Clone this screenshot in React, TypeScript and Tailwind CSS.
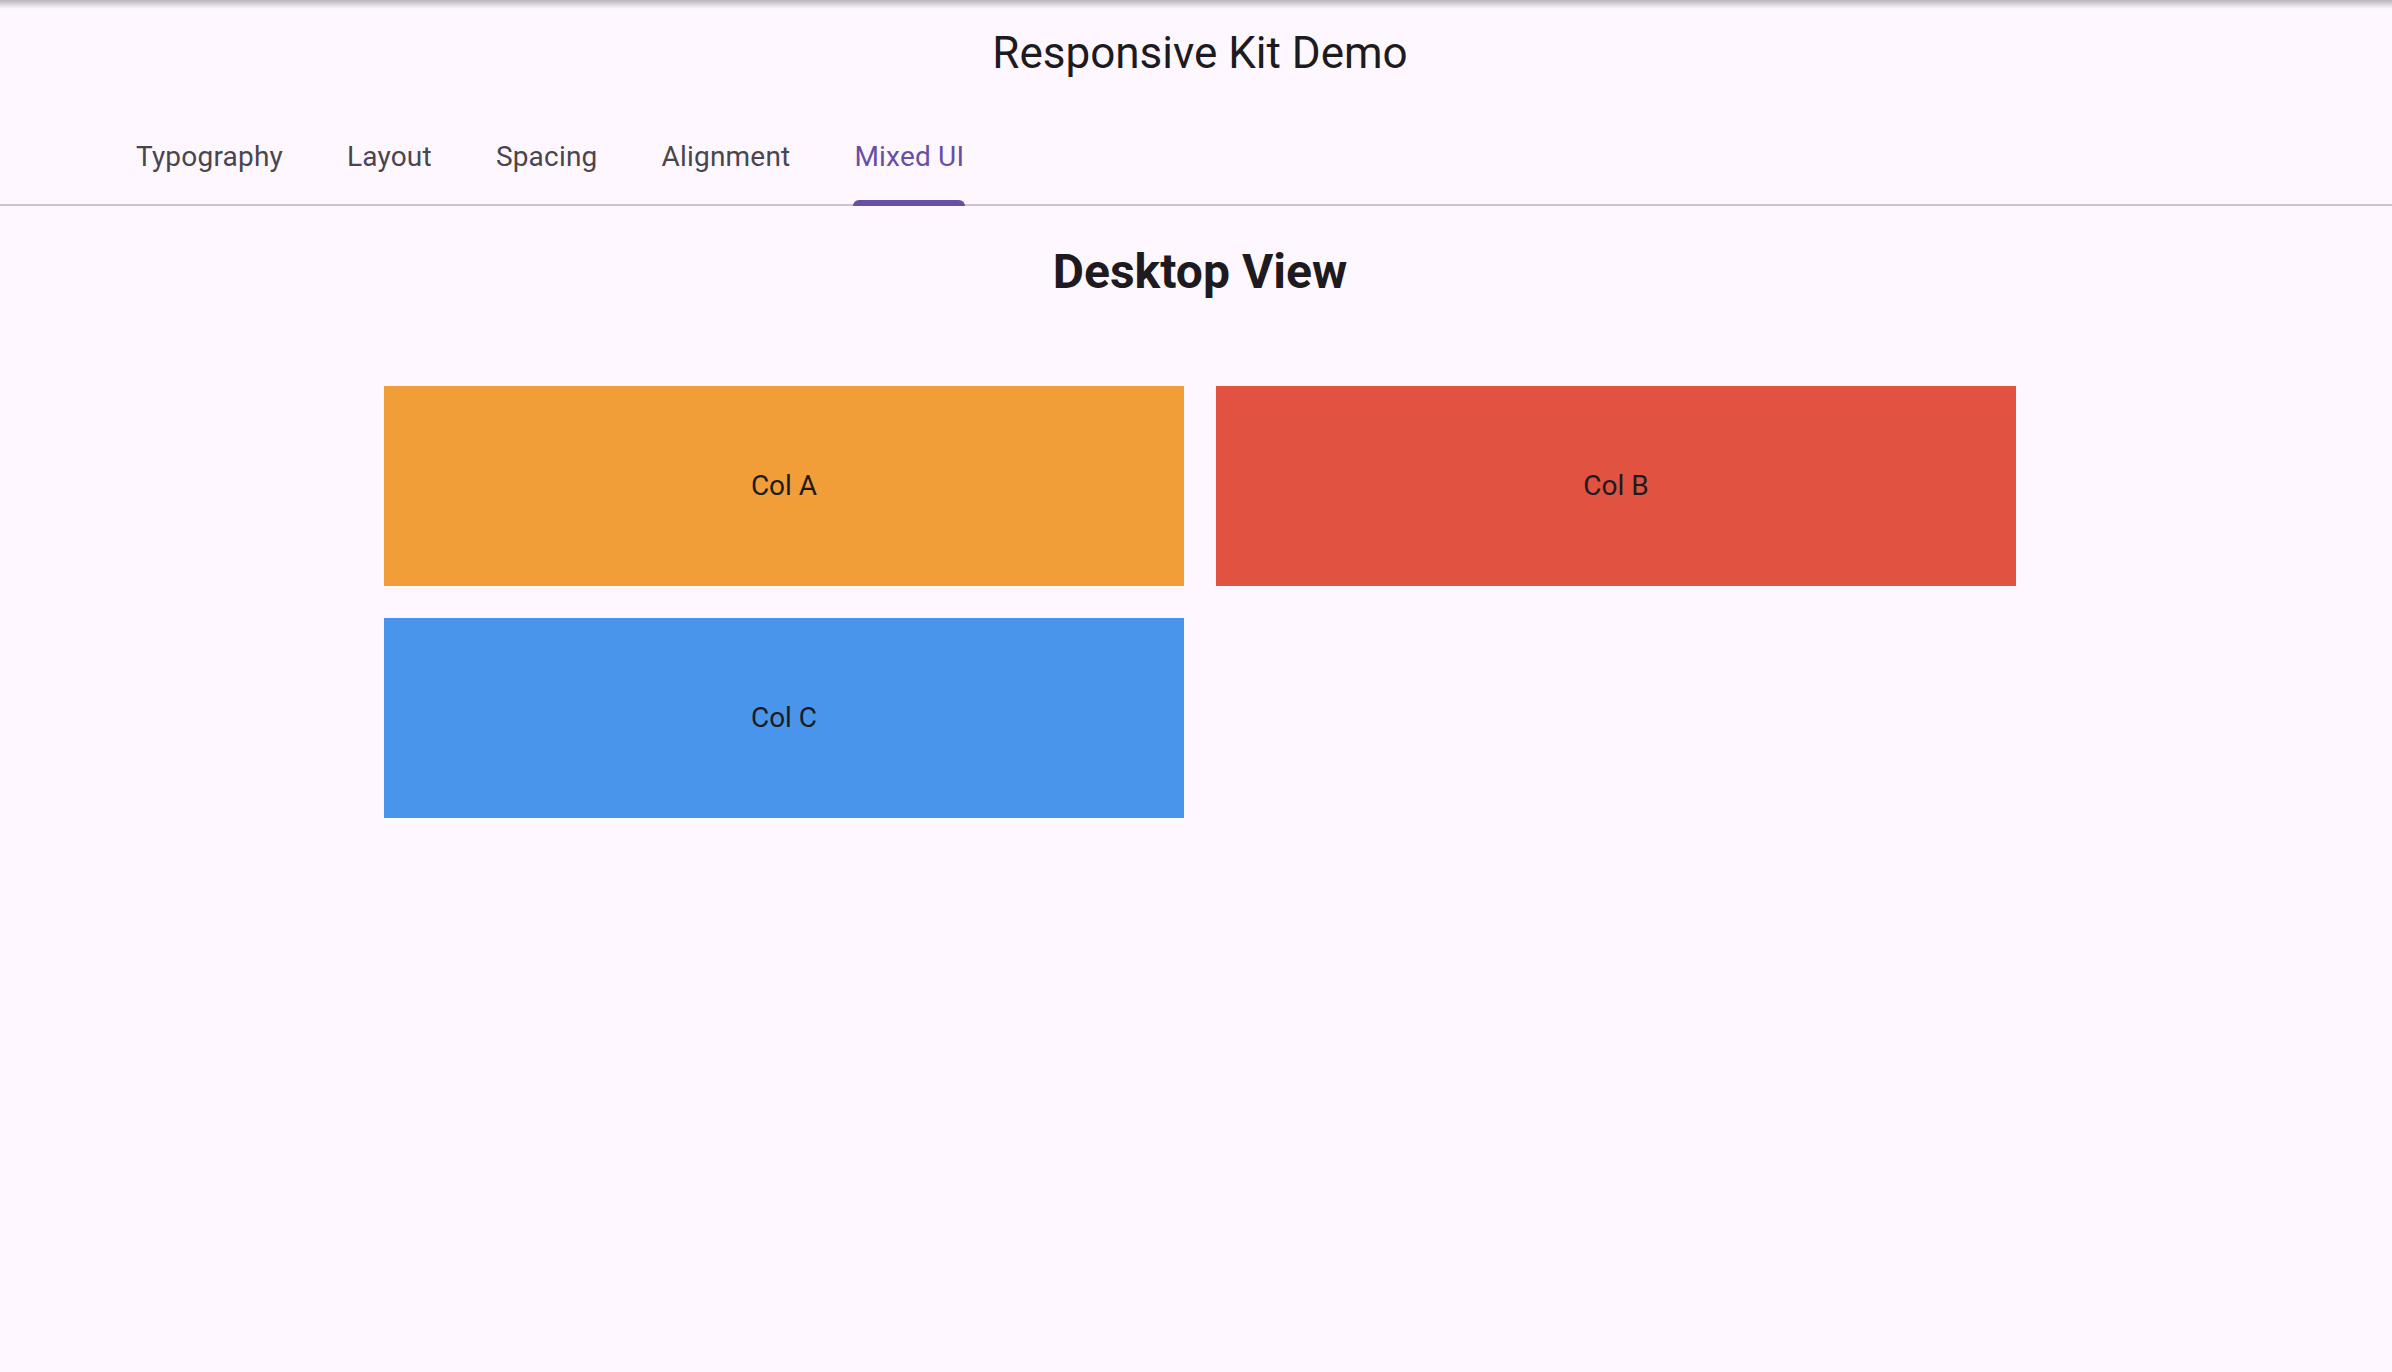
const tabs = ['Typography', 'Layout', 'Spacing', 'Alignment', 'Mixed UI'];

const cols = [
  { label: 'Col A', color: 'bg-[#f19e38]' },
  { label: 'Col B', color: 'bg-[#e15241]' },
  { label: 'Col C', color: 'bg-[#4a95ec]' },
];

export default function App() {
  const active = 4;

  return (
    <div className="relative min-h-screen w-full bg-[#fef7ff] font-['Roboto',sans-serif] text-[#1d1b20]">
      {/* top edge shadow */}
      <div className="pointer-events-none absolute inset-x-0 top-0 h-[9px] bg-gradient-to-b from-[#b9b5bc] to-transparent" />

      {/* App bar */}
      <header className="flex h-[112px] items-center justify-center pb-[6px] pl-2">
        <h1 className="text-[44px] leading-none font-normal">Responsive Kit Demo</h1>
      </header>

      {/* Tab bar */}
      <nav className="flex border-b-2 border-[#cac4d0] pl-[104px]">
        {tabs.map((tab, i) => (
          <div key={tab} className="flex h-[92px] items-center px-[32px] pb-[2px]">
            <div className="relative flex h-full items-center">
              <span
                className={`text-[28px] leading-none tracking-[0.2px] ${
                  i === active ? 'text-[#6750a4]' : 'text-[#49454f]'
                }`}
              >
                {tab}
              </span>
              {i === active && (
                <div className="absolute -inset-x-px -bottom-[4px] h-[6px] rounded-t-[6px] bg-[#6750a4]" />
              )}
            </div>
          </div>
        ))}
      </nav>

      {/* Content */}
      <main className="flex flex-col items-center pl-2">
        <h2 className="mt-[42px] text-[48px] leading-none font-bold">Desktop View</h2>
        <div className="mt-[90px] grid w-[1632px] grid-cols-2 gap-[32px]">
          {cols.map((c) => (
            <div key={c.label} className={`flex h-[200px] items-center justify-center ${c.color}`}>
              <span className="text-[28px] leading-none">{c.label}</span>
            </div>
          ))}
        </div>
      </main>
    </div>
  );
}
